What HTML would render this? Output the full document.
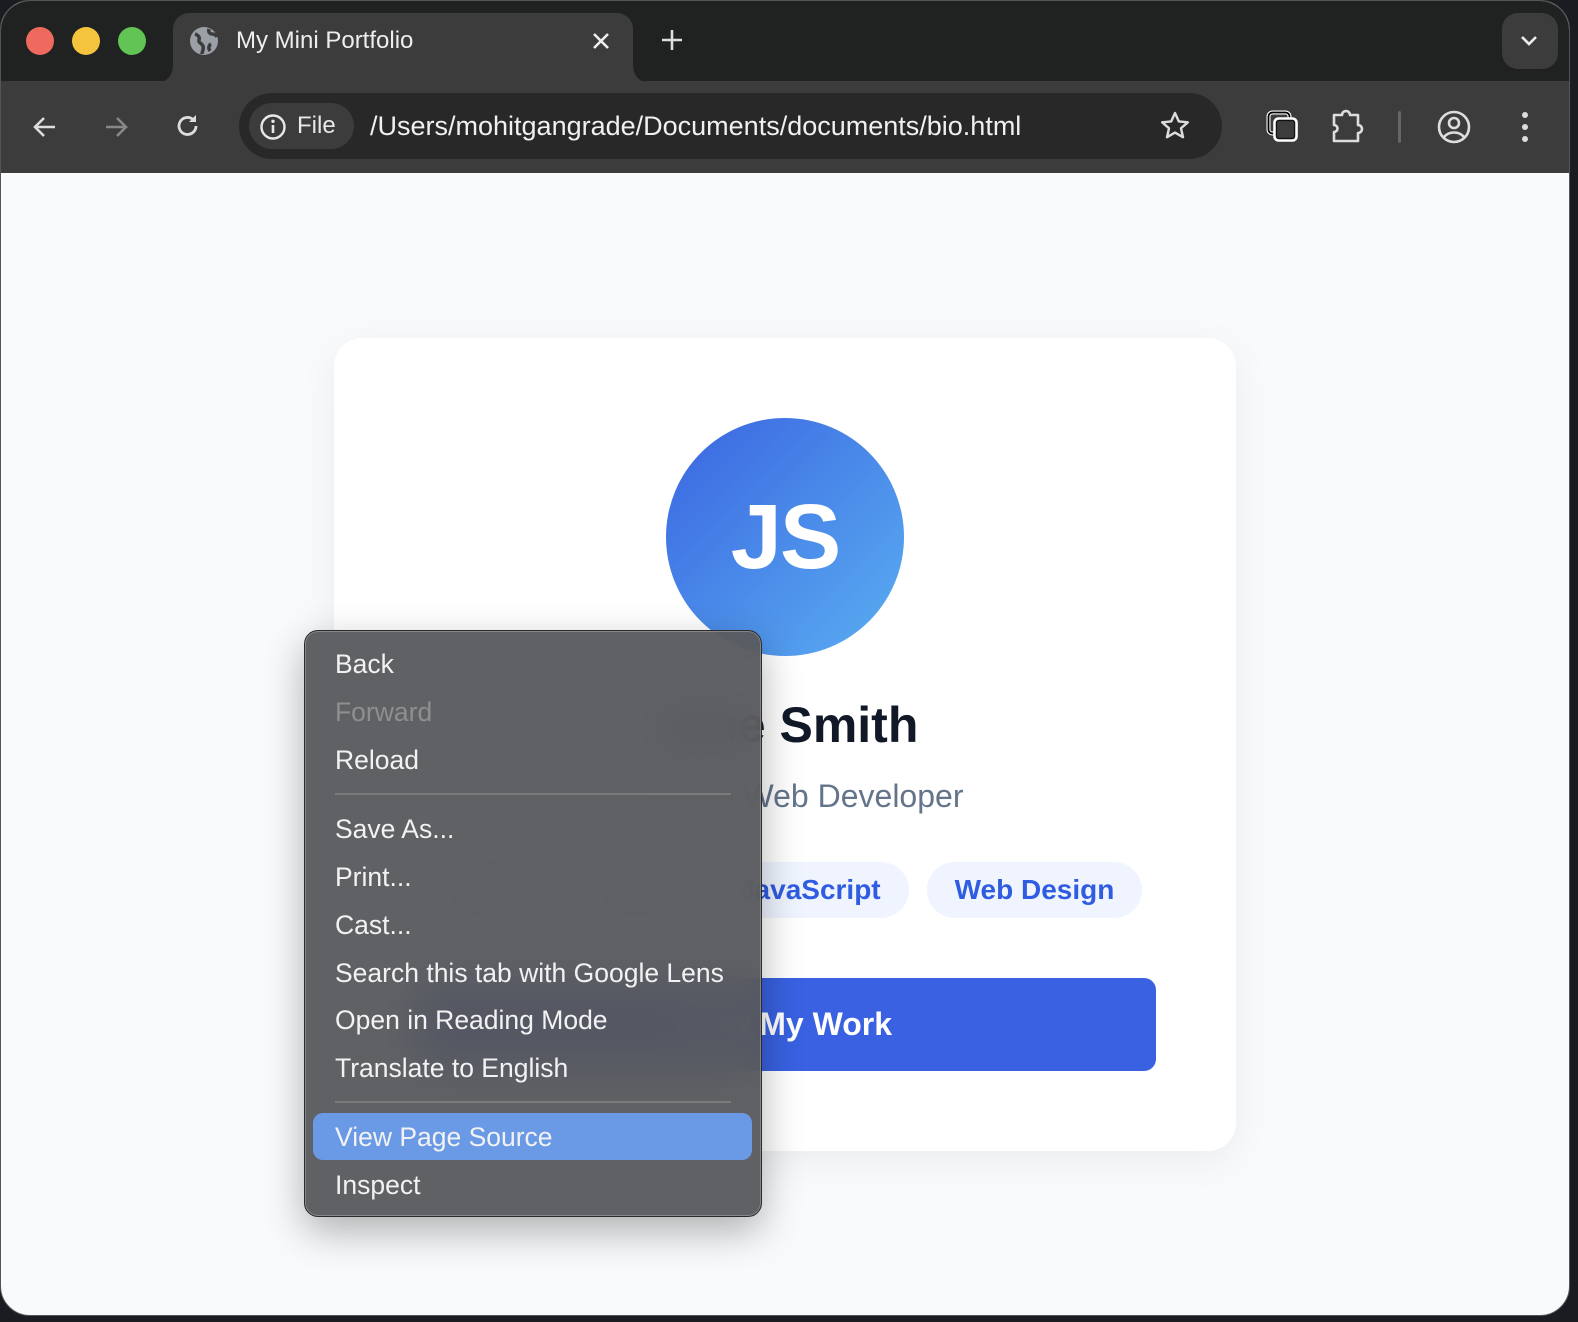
<!DOCTYPE html>
<html><head><meta charset="utf-8">
<style>
*{margin:0;padding:0;box-sizing:border-box}
html,body{width:1578px;height:1322px;overflow:hidden;background:#1b1c22;font-family:"Liberation Sans",sans-serif}
#win{position:absolute;left:0;top:0;width:1570px;height:1316px;border-radius:30px;overflow:hidden;background:#f8fafc;border:1px solid #555}
#top{position:absolute;left:0;top:0;width:100%;height:80px;background:#202221}
.dot{position:absolute;top:26px;width:28px;height:28px;border-radius:50%}
#tab{position:absolute;left:172px;top:12px;width:460px;height:70px;background:#3c3c3c;border-radius:16px 16px 0 0}
#tab:before,#tab:after{content:"";position:absolute;bottom:0;width:16px;height:16px}
#tab:before{left:-16px;background:radial-gradient(circle at 0 0,transparent 15.5px,#3c3c3c 16px)}
#tab:after{right:-16px;background:radial-gradient(circle at 100% 0,transparent 15.5px,#3c3c3c 16px)}
#tool{position:absolute;left:0;top:80px;width:100%;height:92px;background:#3c3c3c}
#omni{position:absolute;left:238px;top:12px;width:983px;height:66px;background:#282828;border-radius:33px}
#chip{position:absolute;left:10px;top:10px;width:105px;height:46px;background:#3c3c3c;border-radius:23px;color:#e8e8e8;font-size:24px;line-height:46px;padding-left:48px}
#url{position:absolute;left:131px;top:0;line-height:66px;color:#f0f0f0;font-size:27px}
.ic{position:absolute}
#card{position:absolute;left:333px;top:337px;width:902px;height:813px;background:#fff;border-radius:28px;box-shadow:0 10px 40px rgba(0,0,0,.06)}
#av{position:absolute;left:332px;top:80px;width:238px;height:238px;border-radius:50%;background:linear-gradient(135deg,#3a65e0,#5aaef2);color:#fff;font-weight:bold;font-size:92px;text-align:center;line-height:238px;letter-spacing:-2px}
#name{position:absolute;left:0;width:100%;top:358px;text-align:center;font-size:50px;font-weight:bold;color:#111827}
#role{position:absolute;left:0;width:100%;top:440px;text-align:center;font-size:32px;color:#64748b}
#tags{position:absolute;left:0;width:100%;top:524px;display:flex;justify-content:center;gap:18px}
.tag{height:56px;line-height:56px;padding:0 28px;border-radius:28px;background:#eff4ff;color:#2f5ce0;font-weight:bold;font-size:28px}
#btn{position:absolute;left:80px;top:640px;width:742px;height:93px;background:#3961e1;border-radius:12px;color:#fff;font-weight:bold;font-size:32px;text-align:center;line-height:93px}
#menu{position:absolute;left:303px;top:629px;width:458px;height:587px;border-radius:14px;background:rgba(86,87,90,.94);backdrop-filter:blur(22px);-webkit-backdrop-filter:blur(22px);border:1.5px solid #2a2a2a;box-shadow:inset 0 0 0 1px rgba(255,255,255,.25),0 14px 40px rgba(0,0,0,.3);color:#f2f2f2;font-size:26.5px}
.mi{position:absolute;left:30px;height:48px;line-height:48px}
.sep{position:absolute;left:30px;width:396px;height:1.5px;background:#7a7b7d}
#hl{position:absolute;left:8px;top:482px;width:439px;height:47px;background:#6a9ae6;border-radius:10px}
</style></head><body>
<div id="win">
 <div id="top">
  <div class="dot" style="left:25px;background:#ee6a5f"></div>
  <div class="dot" style="left:71px;background:#f5c43f"></div>
  <div class="dot" style="left:117px;background:#61c454"></div>
  <div id="tab">
   <svg class="ic" style="left:16px;top:13px" width="30" height="30" viewBox="0 0 30 30"><circle cx="15" cy="15" r="14" fill="#9aa0a6"/><path d="M6 8c3 1 5 3 4 6s3 3 4 6-1 6-1 8M20 3c-1 3 1 5 3 5s4 1 5 3M22 18c-2 1-3 4-1 7" stroke="#3c3c3c" stroke-width="3.5" fill="none"/></svg>
   <div style="position:absolute;left:63px;top:0;line-height:56px;color:#eee;font-size:24px">My Mini Portfolio</div>
   <svg class="ic" style="left:418px;top:18px" width="20" height="20"><path d="M3 3L17 17M17 3L3 17" stroke="#eee" stroke-width="2.6"/></svg>
  </div>
  <svg class="ic" style="left:659px;top:27px" width="24" height="24"><path d="M12 2v20M2 12h20" stroke="#ddd" stroke-width="2.6"/></svg>
  <div style="position:absolute;left:1501px;top:12px;width:56px;height:56px;border-radius:16px;background:#3c3c3c"></div>
  <svg class="ic" style="left:1518px;top:30px" width="20" height="20"><path d="M3 6l7 7 7-7" stroke="#eee" stroke-width="2.6" fill="none"/></svg>
 </div>
 <div id="tool">
  <svg class="ic" style="left:30px;top:32px" width="28" height="28"><path d="M24 14H4M13 5l-9 9 9 9" stroke="#ddd" stroke-width="2.6" fill="none"/></svg>
  <svg class="ic" style="left:101px;top:32px" width="28" height="28"><path d="M4 14h20M15 5l9 9-9 9" stroke="#888" stroke-width="2.6" fill="none"/></svg>
  <svg class="ic" style="left:173px;top:31px" width="28" height="28"><path d="M22 14a8.5 8.5 0 1 1-3-6.5" stroke="#ddd" stroke-width="2.8" fill="none"/><path d="M22 3v7h-7z" fill="#ddd"/></svg>
  <div id="omni">
   <div id="chip">File</div>
   <svg class="ic" style="left:20px;top:20px" width="28" height="28"><circle cx="14" cy="14" r="11.5" stroke="#e8e8e8" stroke-width="2.4" fill="none"/><path d="M14 12v8" stroke="#e8e8e8" stroke-width="2.6"/><circle cx="14" cy="8.3" r="1.7" fill="#e8e8e8"/></svg>
   <div id="url">/Users/mohitgangrade/Documents/documents/bio.html</div>
   <svg class="ic" style="left:920px;top:17px" width="32" height="32" viewBox="0 0 32 32"><path d="M16 3l3.8 8.4 9 .9-6.8 6 2 8.9L16 22.6l-8 4.6 2-8.9-6.8-6 9-.9z" stroke="#ddd" stroke-width="2.4" fill="none" stroke-linejoin="round"/></svg>
  </div>
  <svg class="ic" style="left:1264px;top:28px" width="38" height="38"><rect x="3.5" y="3.5" width="21" height="21" rx="4" stroke="#fff" stroke-width="4" fill="none"/><rect x="3.5" y="3.5" width="21" height="21" rx="4" stroke="#000" stroke-width="1.8" fill="none"/><rect x="9.5" y="9.5" width="22" height="22" rx="4" stroke="#fff" stroke-width="2.6" fill="#3c3c3c"/><rect x="11.5" y="11.5" width="18" height="18" rx="2.5" stroke="#111" stroke-width="1.2" fill="none"/></svg>
  <svg class="ic" style="left:1330px;top:27px" width="36" height="36"><path d="M3 7h8a4 4 0 0 1 8 0h8v10a4 4 0 0 1 0 8v8H3v-9a3 3 0 0 0 0-7z" stroke="#ddd" stroke-width="2.6" fill="none" stroke-linejoin="round"/></svg>
  <div style="position:absolute;left:1397px;top:30px;width:3px;height:32px;background:#666;border-radius:2px"></div>
  <svg class="ic" style="left:1435px;top:28px" width="36" height="36"><circle cx="18" cy="18" r="15" stroke="#ddd" stroke-width="2.6" fill="none"/><circle cx="18" cy="14" r="5" stroke="#ddd" stroke-width="2.6" fill="none"/><path d="M8 28c5-6 15-6 20 0" stroke="#ddd" stroke-width="2.6" fill="none"/></svg>
  <svg class="ic" style="left:1514px;top:28px" width="20" height="36"><circle cx="10" cy="6" r="3" fill="#ddd"/><circle cx="10" cy="18" r="3" fill="#ddd"/><circle cx="10" cy="30" r="3" fill="#ddd"/></svg>
 </div>
 <div id="card">
  <div id="av">JS</div>
  <div id="name">Jane Smith</div>
  <div id="role">Frontend Web Developer</div>
  <div id="tags"><span class="tag">HTML</span><span class="tag">CSS</span><span class="tag">JavaScript</span><span class="tag">Web Design</span></div>
  <div id="btn">View My Work</div>
 </div>
 <div id="menu">
  <div class="mi" style="top:9px">Back</div>
  <div class="mi" style="top:57px;color:#8e8f91">Forward</div>
  <div class="mi" style="top:105px">Reload</div>
  <div class="sep" style="top:162px"></div>
  <div class="mi" style="top:174px">Save As...</div>
  <div class="mi" style="top:222px">Print...</div>
  <div class="mi" style="top:270px">Cast...</div>
  <div class="mi" style="top:318px">Search this tab with Google Lens</div>
  <div class="mi" style="top:365px">Open in Reading Mode</div>
  <div class="mi" style="top:413px">Translate to English</div>
  <div class="sep" style="top:470px"></div>
  <div id="hl"></div>
  <div class="mi" style="top:482px">View Page Source</div>
  <div class="mi" style="top:530px">Inspect</div>
 </div>
</div>
</body></html>
